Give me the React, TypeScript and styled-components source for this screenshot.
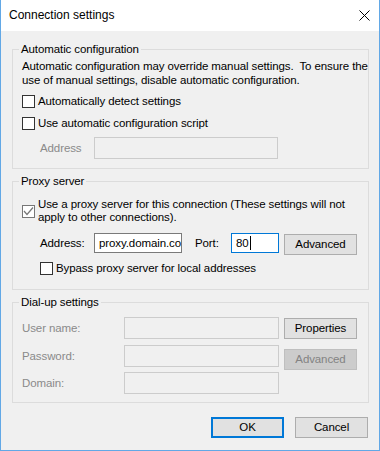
import React from 'react';
import styled, { createGlobalStyle } from 'styled-components';

const Global = createGlobalStyle`
  html, body { margin: 0; padding: 0; background: #ffffff; }
  body {
    font-family: "Segoe UI", "Liberation Sans", Arial, sans-serif;
    font-size: 11.5px;
    letter-spacing: -0.1px;
    color: #000000;
  }
  * { box-sizing: border-box; }
`;

const Window = styled.div`
  width: 380px;
  height: 451px;
  border: 1px solid #62a8e6;
  border-top: none;
  background: #f0f0f0;
  display: flex;
  flex-direction: column;
`;

const TitleBar = styled.div`
  height: 31px;
  flex: none;
  background: #ffffff;
  display: flex;
  align-items: center;
  justify-content: space-between;
  padding: 0 9px 0 8px;
`;

const Title = styled.span`
  font-size: 12px;
  letter-spacing: 0;
  line-height: 15px;
`;

const Content = styled.div`
  padding: 11px 10px 0 11px;
  display: flex;
  flex-direction: column;
  gap: 5px;
`;

const Group = styled.fieldset<{ $pb: number }>`
  margin: 0;
  min-width: 0;
  border: 1px solid #dcdcdc;
  padding: 0 9px ${p => p.$pb}px 9px;
  display: flex;
  flex-direction: column;
`;

const Legend = styled.legend`
  padding: 0 2px;
  margin-left: -3px;
  line-height: 15px;
`;

const Description = styled.div`
  margin-top: 2px;
  line-height: 14px;
  white-space: nowrap;
`;

const CheckRow = styled.div<{ $mt: number; $indent?: number }>`
  display: flex;
  align-items: center;
  margin-top: ${p => p.$mt}px;
  margin-left: ${p => p.$indent ?? 0}px;
`;

const Box = styled.span<{ $checked?: boolean }>`
  width: 13px;
  height: 13px;
  flex: none;
  border: 1px solid ${p => (p.$checked ? '#777777' : '#333333')};
  background: #ffffff;
  display: flex;
  align-items: center;
  justify-content: center;
`;

const CheckLabel = styled.span`
  margin-left: 3px;
  line-height: 13px;
  white-space: nowrap;
`;

const FieldRow = styled.div<{ $mt: number; $indent?: number }>`
  display: flex;
  align-items: flex-start;
  margin-top: ${p => p.$mt}px;
  margin-left: ${p => p.$indent ?? 0}px;
`;

const Label = styled.span<{ $w: number; $h: number; $disabled?: boolean }>`
  width: ${p => p.$w}px;
  height: ${p => p.$h}px;
  line-height: ${p => p.$h}px;
  flex: none;
  color: ${p => (p.$disabled ? '#8a8a8a' : '#000000')};
  white-space: nowrap;
`;

const TextBox = styled.div<{ $w: number; $h: number; $disabled?: boolean; $focused?: boolean }>`
  width: ${p => p.$w}px;
  height: ${p => p.$h}px;
  flex: none;
  border: 1px solid
    ${p => (p.$disabled ? '#cccccc' : p.$focused ? '#0078d7' : '#7a7a7a')};
  background: ${p => (p.$disabled ? '#f0f0f0' : '#ffffff')};
  padding: 0 3px 0 4px;
  line-height: ${p => p.$h - 2}px;
  overflow: hidden;
  white-space: nowrap;
  display: flex;
  align-items: center;
`;

const Caret = styled.span`
  display: inline-block;
  width: 1px;
  height: 14px;
  background: #000000;
  margin-left: 1px;
`;

const Button = styled.div<{ $disabled?: boolean; $default?: boolean; $mt?: number }>`
  width: 73px;
  height: 21px;
  flex: none;
  margin-top: ${p => p.$mt ?? 0}px;
  display: flex;
  align-items: center;
  justify-content: center;
  background: ${p => (p.$disabled ? '#cccccc' : '#e1e1e1')};
  border: ${p =>
    p.$default ? '2px solid #0078d7' : p.$disabled ? '1px solid #bfbfbf' : '1px solid #adadad'};
  color: ${p => (p.$disabled ? '#838383' : '#000000')};
  line-height: 15px;
`;

const PortGap = styled.span`
  width: 13px;
  flex: none;
`;

const ButtonGap = styled.span`
  width: 5px;
  flex: none;
`;

const DialLayout = styled.div`
  margin-top: 7px;
  display: flex;
  align-items: flex-start;
`;

const DialFields = styled.div`
  display: flex;
  flex-direction: column;
  gap: 5.5px;
`;

const DialField = styled.div`
  display: flex;
  align-items: center;
`;

const DialButtons = styled.div`
  margin-left: 5px;
  padding-top: 1px;
  display: flex;
  flex-direction: column;
  gap: 10px;
`;

const Footer = styled.div`
  margin-top: 14px;
  padding-right: 11px;
  display: flex;
  justify-content: flex-end;
  gap: 11px;
`;

const CloseIcon = () => (
  <svg width="11" height="11" viewBox="0 0 11 11">
    <path d="M0.5 0.5 L10.5 10.5 M10.5 0.5 L0.5 10.5" stroke="#000" strokeWidth="1" />
  </svg>
);

const CheckMark = () => (
  <svg width="11" height="11" viewBox="0 0 11 11">
    <path d="M1 5 L4 8.5 L10 1.5" stroke="#777" strokeWidth="1.2" fill="none" />
  </svg>
);

const Checkbox = ({ checked, children, mt, indent }: { checked?: boolean; children: React.ReactNode; mt: number; indent?: number }) => (
  <CheckRow $mt={mt} $indent={indent}>
    <Box $checked={checked}>{checked && <CheckMark />}</Box>
    <CheckLabel>{children}</CheckLabel>
  </CheckRow>
);

export default function App() {
  return (
    <>
      <Global />
      <Window>
        <TitleBar>
          <Title>Connection settings</Title>
          <CloseIcon />
        </TitleBar>
        <Content>
          <Group $pb={9}>
            <Legend>Automatic configuration</Legend>
            <Description>
              Automatic configuration may override manual settings.&nbsp; To ensure the
              <br />
              use of manual settings, disable automatic configuration.
            </Description>
            <Checkbox mt={8}>Automatically detect settings</Checkbox>
            <Checkbox mt={9}>Use automatic configuration script</Checkbox>
            <FieldRow $mt={7} $indent={18}>
              <Label $w={54} $h={22} $disabled>Address</Label>
              <TextBox $w={184} $h={22} $disabled />
            </FieldRow>
          </Group>

          <Group $pb={14}>
            <Legend>Proxy server</Legend>
            <Checkbox checked mt={9}>
              Use a proxy server for this connection (These settings will not
              <br />
              apply to other connections).
            </Checkbox>
            <FieldRow $mt={9} $indent={18}>
              <Label $w={54} $h={21}>Address:</Label>
              <TextBox $w={88} $h={20}>proxy.domain.com</TextBox>
              <PortGap />
              <Label $w={36} $h={21}>Port:</Label>
              <TextBox $w={48} $h={20} $focused>
                80<Caret />
              </TextBox>
              <ButtonGap />
              <Button $mt={1}>Advanced</Button>
            </FieldRow>
            <Checkbox mt={7} indent={18}>Bypass proxy server for local addresses</Checkbox>
          </Group>

          <Group $pb={8}>
            <Legend>Dial-up settings</Legend>
            <DialLayout>
              <DialFields>
                <DialField>
                  <Label $w={102} $h={22} $disabled>User name:</Label>
                  <TextBox $w={155} $h={22} $disabled />
                </DialField>
                <DialField>
                  <Label $w={102} $h={22} $disabled>Password:</Label>
                  <TextBox $w={155} $h={22} $disabled />
                </DialField>
                <DialField>
                  <Label $w={102} $h={22} $disabled>Domain:</Label>
                  <TextBox $w={155} $h={22} $disabled />
                </DialField>
              </DialFields>
              <DialButtons>
                <Button>Properties</Button>
                <Button $disabled>Advanced</Button>
              </DialButtons>
            </DialLayout>
          </Group>
        </Content>
        <Footer>
          <Button $default>OK</Button>
          <Button>Cancel</Button>
        </Footer>
      </Window>
    </>
  );
}
